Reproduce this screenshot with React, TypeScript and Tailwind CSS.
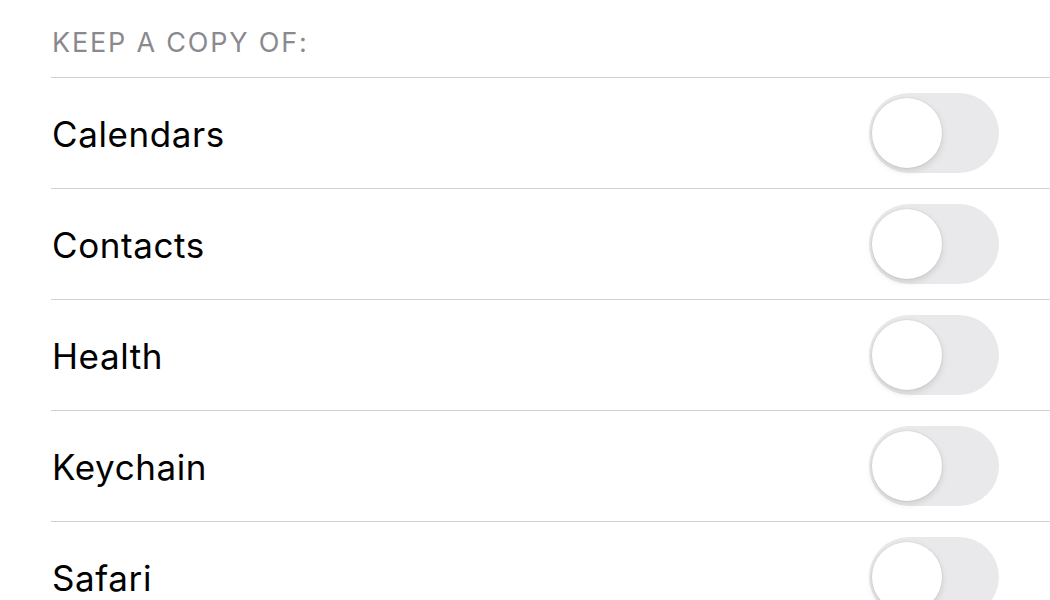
import React from "react"

const items = ["Calendars", "Contacts", "Health", "Keychain", "Safari"]

function Toggle() {
  return (
    <div className="relative w-[130px] h-[80px] rounded-full bg-[#e9e9eb] shrink-0">
      <div className="absolute left-[3px] top-[5px] w-[70px] h-[70px] rounded-full bg-white shadow-[0_3px_7px_rgba(0,0,0,0.12),0_0_0_1px_rgba(0,0,0,0.04)]" />
    </div>
  )
}

export default function App() {
  return (
    <div className="w-[1050px] h-[600px] overflow-hidden bg-white font-['Inter',sans-serif]">
      <div className="h-[77px] flex items-end pl-[52px] pb-[21px]">
        <span className="text-[27px] leading-none tracking-[1.8px] text-[#8a8a8e]">KEEP A COPY OF:</span>
      </div>
      <div className="ml-[51px]">
        {items.map(label => (
          <div key={label} className="h-[111px] border-t border-[#d1d1d6] flex items-center justify-between pr-[51px]">
            <span className="text-[35px] leading-none tracking-[0.6px] text-black pl-px pt-[2px]">{label}</span>
            <Toggle />
          </div>
        ))}
      </div>
    </div>
  )
}
